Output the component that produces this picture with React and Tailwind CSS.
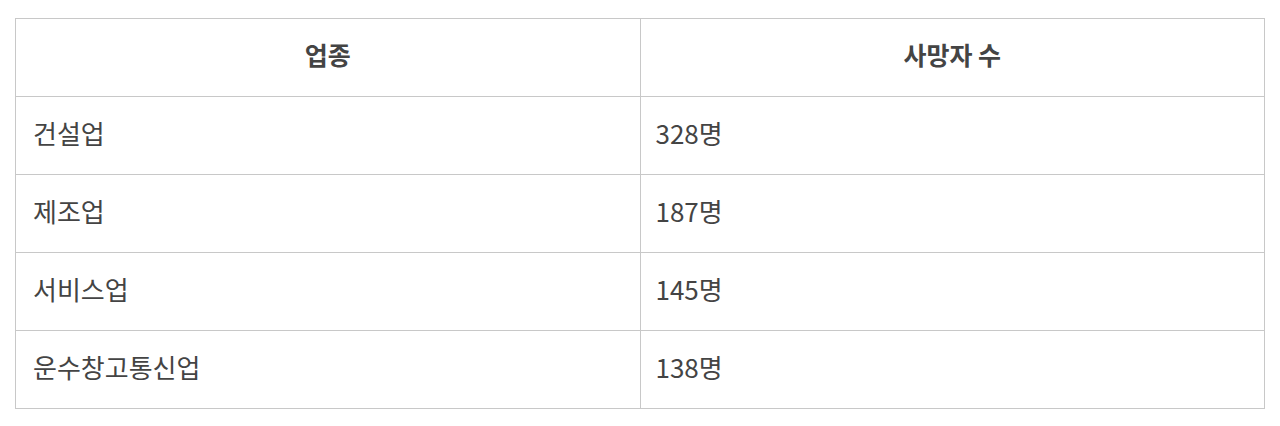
import React from "react";

const rows = [
  ["건설업", "328명"],
  ["제조업", "187명"],
  ["서비스업", "145명"],
  ["운수창고통신업", "138명"],
];

export default function App() {
  return (
    <div
      className="min-h-screen bg-white px-[15px] pt-[18px]"
      style={{ fontFamily: '"Noto Sans CJK KR", "Noto Sans", sans-serif' }}
    >
      <table className="w-full table-fixed border-collapse text-[#444]">
        <thead>
          <tr>
            <th className="h-[78px] border border-[#c8c8c8] pb-[6px] text-center text-[25px] font-bold">업종</th>
            <th className="h-[78px] border border-[#c8c8c8] pb-[6px] text-center text-[25px] font-bold">사망자 수</th>
          </tr>
        </thead>
        <tbody>
          {rows.map(([name, count]) => (
            <tr key={name}>
              <td className="h-[78px] border border-[#c8c8c8] px-[17px] pb-[6px] text-[26px]">{name}</td>
              <td className="h-[78px] border border-[#c8c8c8] px-[15px] pb-[6px] text-[26px]">{count}</td>
            </tr>
          ))}
        </tbody>
      </table>
    </div>
  );
}
